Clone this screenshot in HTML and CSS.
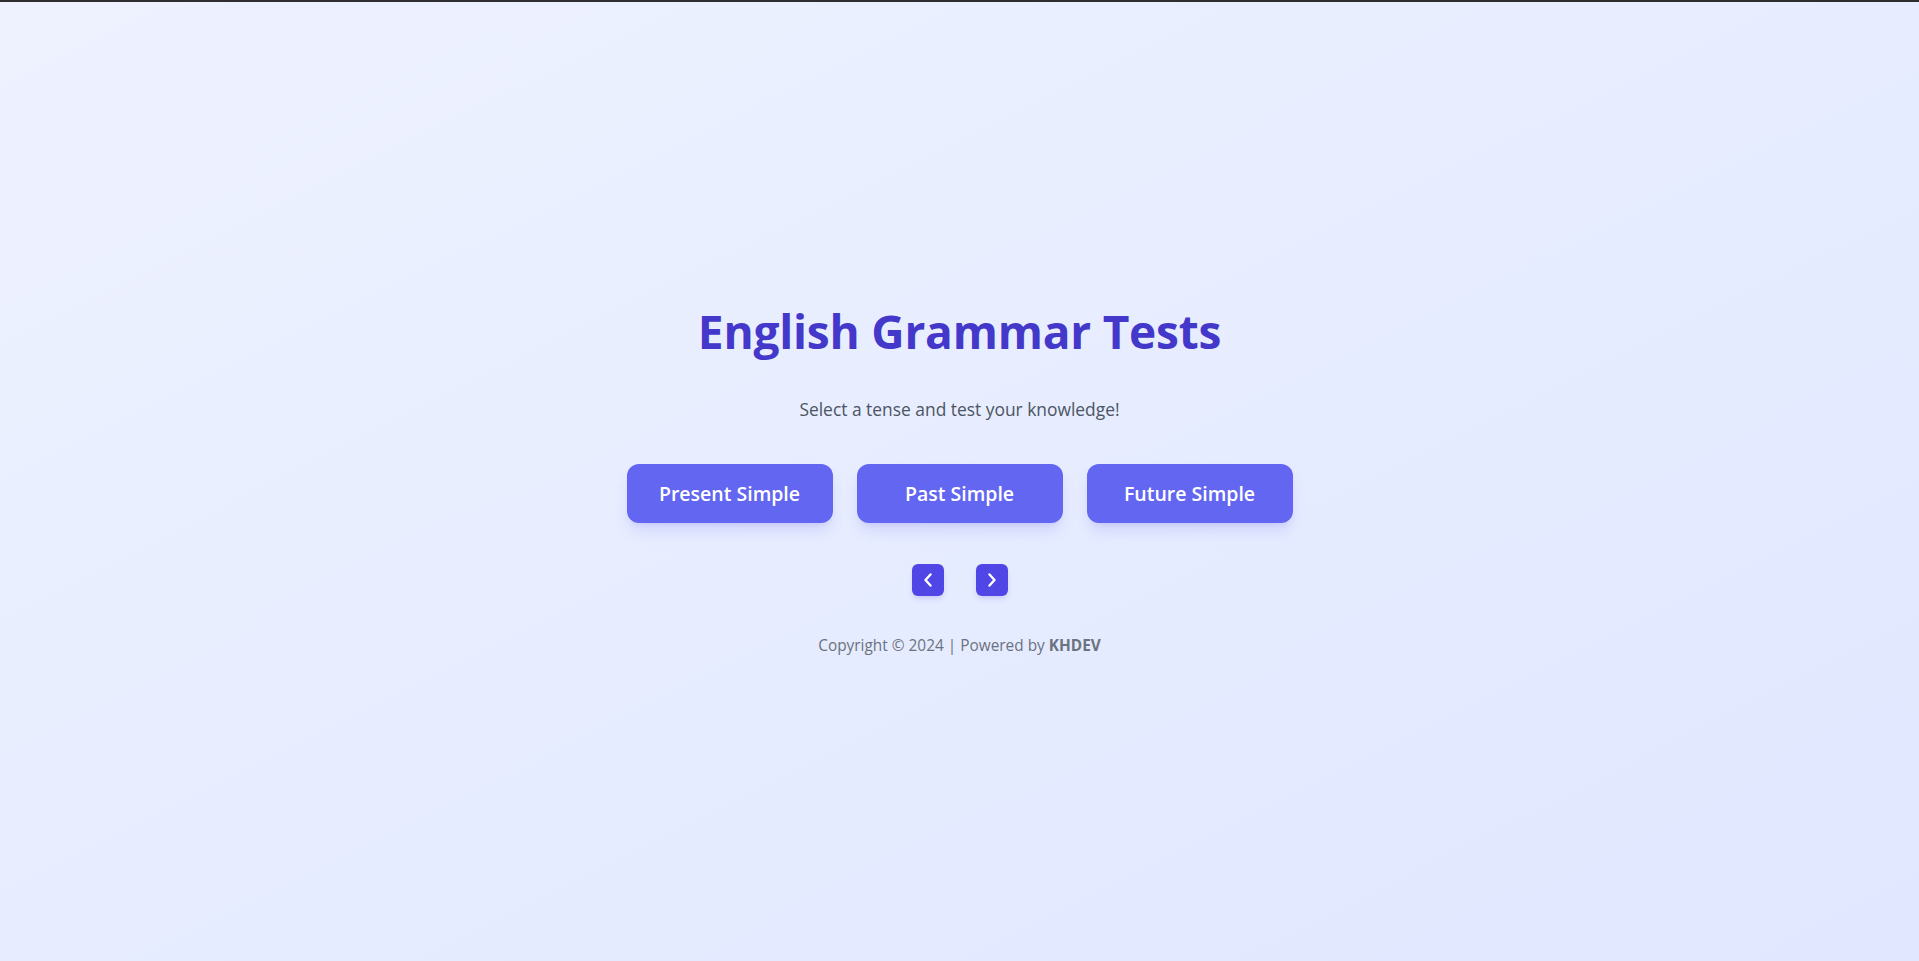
FILE: index.html
```html
<!DOCTYPE html>
<html lang="en">
<head>
<meta charset="utf-8">
<title>English Grammar Tests</title>
<link rel="stylesheet" href="styles.css">
</head>
<body>
<main class="page">
  <section class="hero">
    <h1 class="title">English Grammar Tests</h1>
    <p class="subtitle">Select a tense and test your knowledge!</p>
    <div class="tenses">
      <button class="tense-btn">Present Simple</button>
      <button class="tense-btn">Past Simple</button>
      <button class="tense-btn">Future Simple</button>
    </div>
    <div class="pager">
      <button class="pager-btn" aria-label="Previous">
        <svg viewBox="0 0 10 14" width="10" height="14"><polyline points="7.5,1.5 2.5,7 7.5,12.5" fill="none" stroke="#fff" stroke-width="2.4" stroke-linecap="round" stroke-linejoin="round"/></svg>
      </button>
      <button class="pager-btn" aria-label="Next">
        <svg viewBox="0 0 10 14" width="10" height="14"><polyline points="2.5,1.5 7.5,7 2.5,12.5" fill="none" stroke="#fff" stroke-width="2.4" stroke-linecap="round" stroke-linejoin="round"/></svg>
      </button>
    </div>
    <p class="footer">Copyright © 2024 | Powered by <strong>KHDEV</strong></p>
  </section>
</main>
</body>
</html>
```
FILE: styles.css
```css
* { box-sizing: border-box; }
html, body { margin: 0; padding: 0; height: 100%; }
body {
  border-top: 2px solid #2e2e2e;
  background: linear-gradient(to bottom right, #eef2ff, #e0e7ff);
  font-family: "Open Sans", "Noto Sans", sans-serif;
}
.page {
  min-height: 959px;
  display: flex;
  align-items: center;
  justify-content: center;
}
.hero {
  display: flex;
  flex-direction: column;
  align-items: center;
  padding: 5px 0 4px;
}
.title {
  margin: 0;
  font-size: 46px;
  line-height: 48px;
  font-weight: 700;
  color: #4338ca;
  letter-spacing: -0.2px;
}
.subtitle {
  margin: 41px 0 0;
  font-size: 17.4px;
  line-height: 26px;
  color: #4b5563;
}
.tenses {
  display: flex;
  gap: 24px;
  margin-top: 42px;
}
.tense-btn {
  width: 206px;
  height: 59px;
  border: none;
  border-radius: 12px;
  background: #6366f1;
  color: #fff;
  font-family: inherit;
  font-size: 19.5px;
  font-weight: 600;
  box-shadow: 0 10px 15px -3px rgba(99, 102, 241, 0.18), 0 4px 6px -4px rgba(99, 102, 241, 0.18);
  cursor: pointer;
}
.pager {
  display: flex;
  gap: 32px;
  margin-top: 41px;
}
.pager-btn {
  width: 32px;
  height: 32px;
  border: none;
  border-radius: 6px;
  background: #4f46e5;
  display: flex;
  align-items: center;
  justify-content: center;
  padding: 0;
  box-shadow: 0 4px 6px -1px rgba(79, 70, 229, 0.15), 0 2px 4px -2px rgba(79, 70, 229, 0.15);
  cursor: pointer;
}
.footer {
  margin: 38px 0 0;
  font-size: 15.4px;
  line-height: 24px;
  color: #6b7280;
}
.footer strong { font-weight: 700; }
```
